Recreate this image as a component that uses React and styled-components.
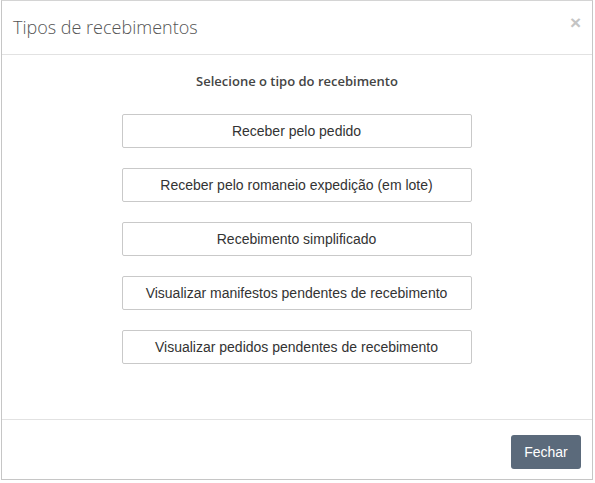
import React from 'react';
import styled, { createGlobalStyle } from 'styled-components';

const Global = createGlobalStyle`
  body {
    margin: 0;
    background: #fff;
  }
`;

const Modal = styled.div`
  box-sizing: border-box;
  width: 592px;
  height: 480px;
  margin-left: 1px;
  border: 1px solid #c6c6c6;
  border-top-color: #d4d4d4;
  background: #fff;
  display: flex;
  flex-direction: column;
`;

const Header = styled.div`
  box-sizing: border-box;
  height: 54px;
  padding: 0 11px 0 11px;
  border-bottom: 1px solid #e2e2e2;
  display: flex;
  align-items: center;
  justify-content: space-between;
`;

const Title = styled.h4`
  margin: 0;
  padding-bottom: 1px;
  font-family: "Open Sans", sans-serif;
  font-weight: 300;
  font-size: 18px;
  color: #555;
`;

const Close = styled.button`
  border: 0;
  background: none;
  padding: 0 0 10px;
  font-family: "Liberation Sans", Arial, sans-serif;
  font-weight: 700;
  font-size: 19px;
  line-height: 1;
  color: #c4c4c4;
  cursor: pointer;
`;

const Body = styled.div`
  flex: 1;
  display: flex;
  flex-direction: column;
  align-items: center;
  padding-top: 17px;
`;

const Lead = styled.p`
  margin: 0 0 24px;
  font-family: "Open Sans", sans-serif;
  font-weight: 600;
  font-size: 13px;
  line-height: 18px;
  color: #444;
`;

const Options = styled.div`
  display: flex;
  flex-direction: column;
  gap: 20px;
  margin-right: 1px;
`;

const Option = styled.button`
  box-sizing: border-box;
  width: 350px;
  height: 34px;
  border: 1px solid #c9c9c9;
  border-radius: 2px;
  background: #fff;
  font-family: "Liberation Sans", Arial, sans-serif;
  font-size: 14px;
  color: #333;
  cursor: pointer;
`;

const Footer = styled.div`
  box-sizing: border-box;
  height: 60px;
  border-top: 1px solid #e2e2e2;
  display: flex;
  justify-content: flex-end;
  align-items: flex-start;
  padding: 15px 11px 0 0;
`;

const Primary = styled.button`
  box-sizing: border-box;
  width: 70px;
  height: 34px;
  border: 0;
  border-radius: 3px;
  background: #5b6a7b;
  color: #fff;
  font-family: "Liberation Sans", Arial, sans-serif;
  font-size: 14px;
  cursor: pointer;
`;

const options = [
  'Receber pelo pedido',
  'Receber pelo romaneio expedição (em lote)',
  'Recebimento simplificado',
  'Visualizar manifestos pendentes de recebimento',
  'Visualizar pedidos pendentes de recebimento',
];

export default function App() {
  return (
    <>
      <Global />
      <Modal>
        <Header>
          <Title>Tipos de recebimentos</Title>
          <Close>×</Close>
        </Header>
        <Body>
          <Lead>Selecione o tipo do recebimento</Lead>
          <Options>
            {options.map((o) => (
              <Option key={o}>{o}</Option>
            ))}
          </Options>
        </Body>
        <Footer>
          <Primary>Fechar</Primary>
        </Footer>
      </Modal>
    </>
  );
}
